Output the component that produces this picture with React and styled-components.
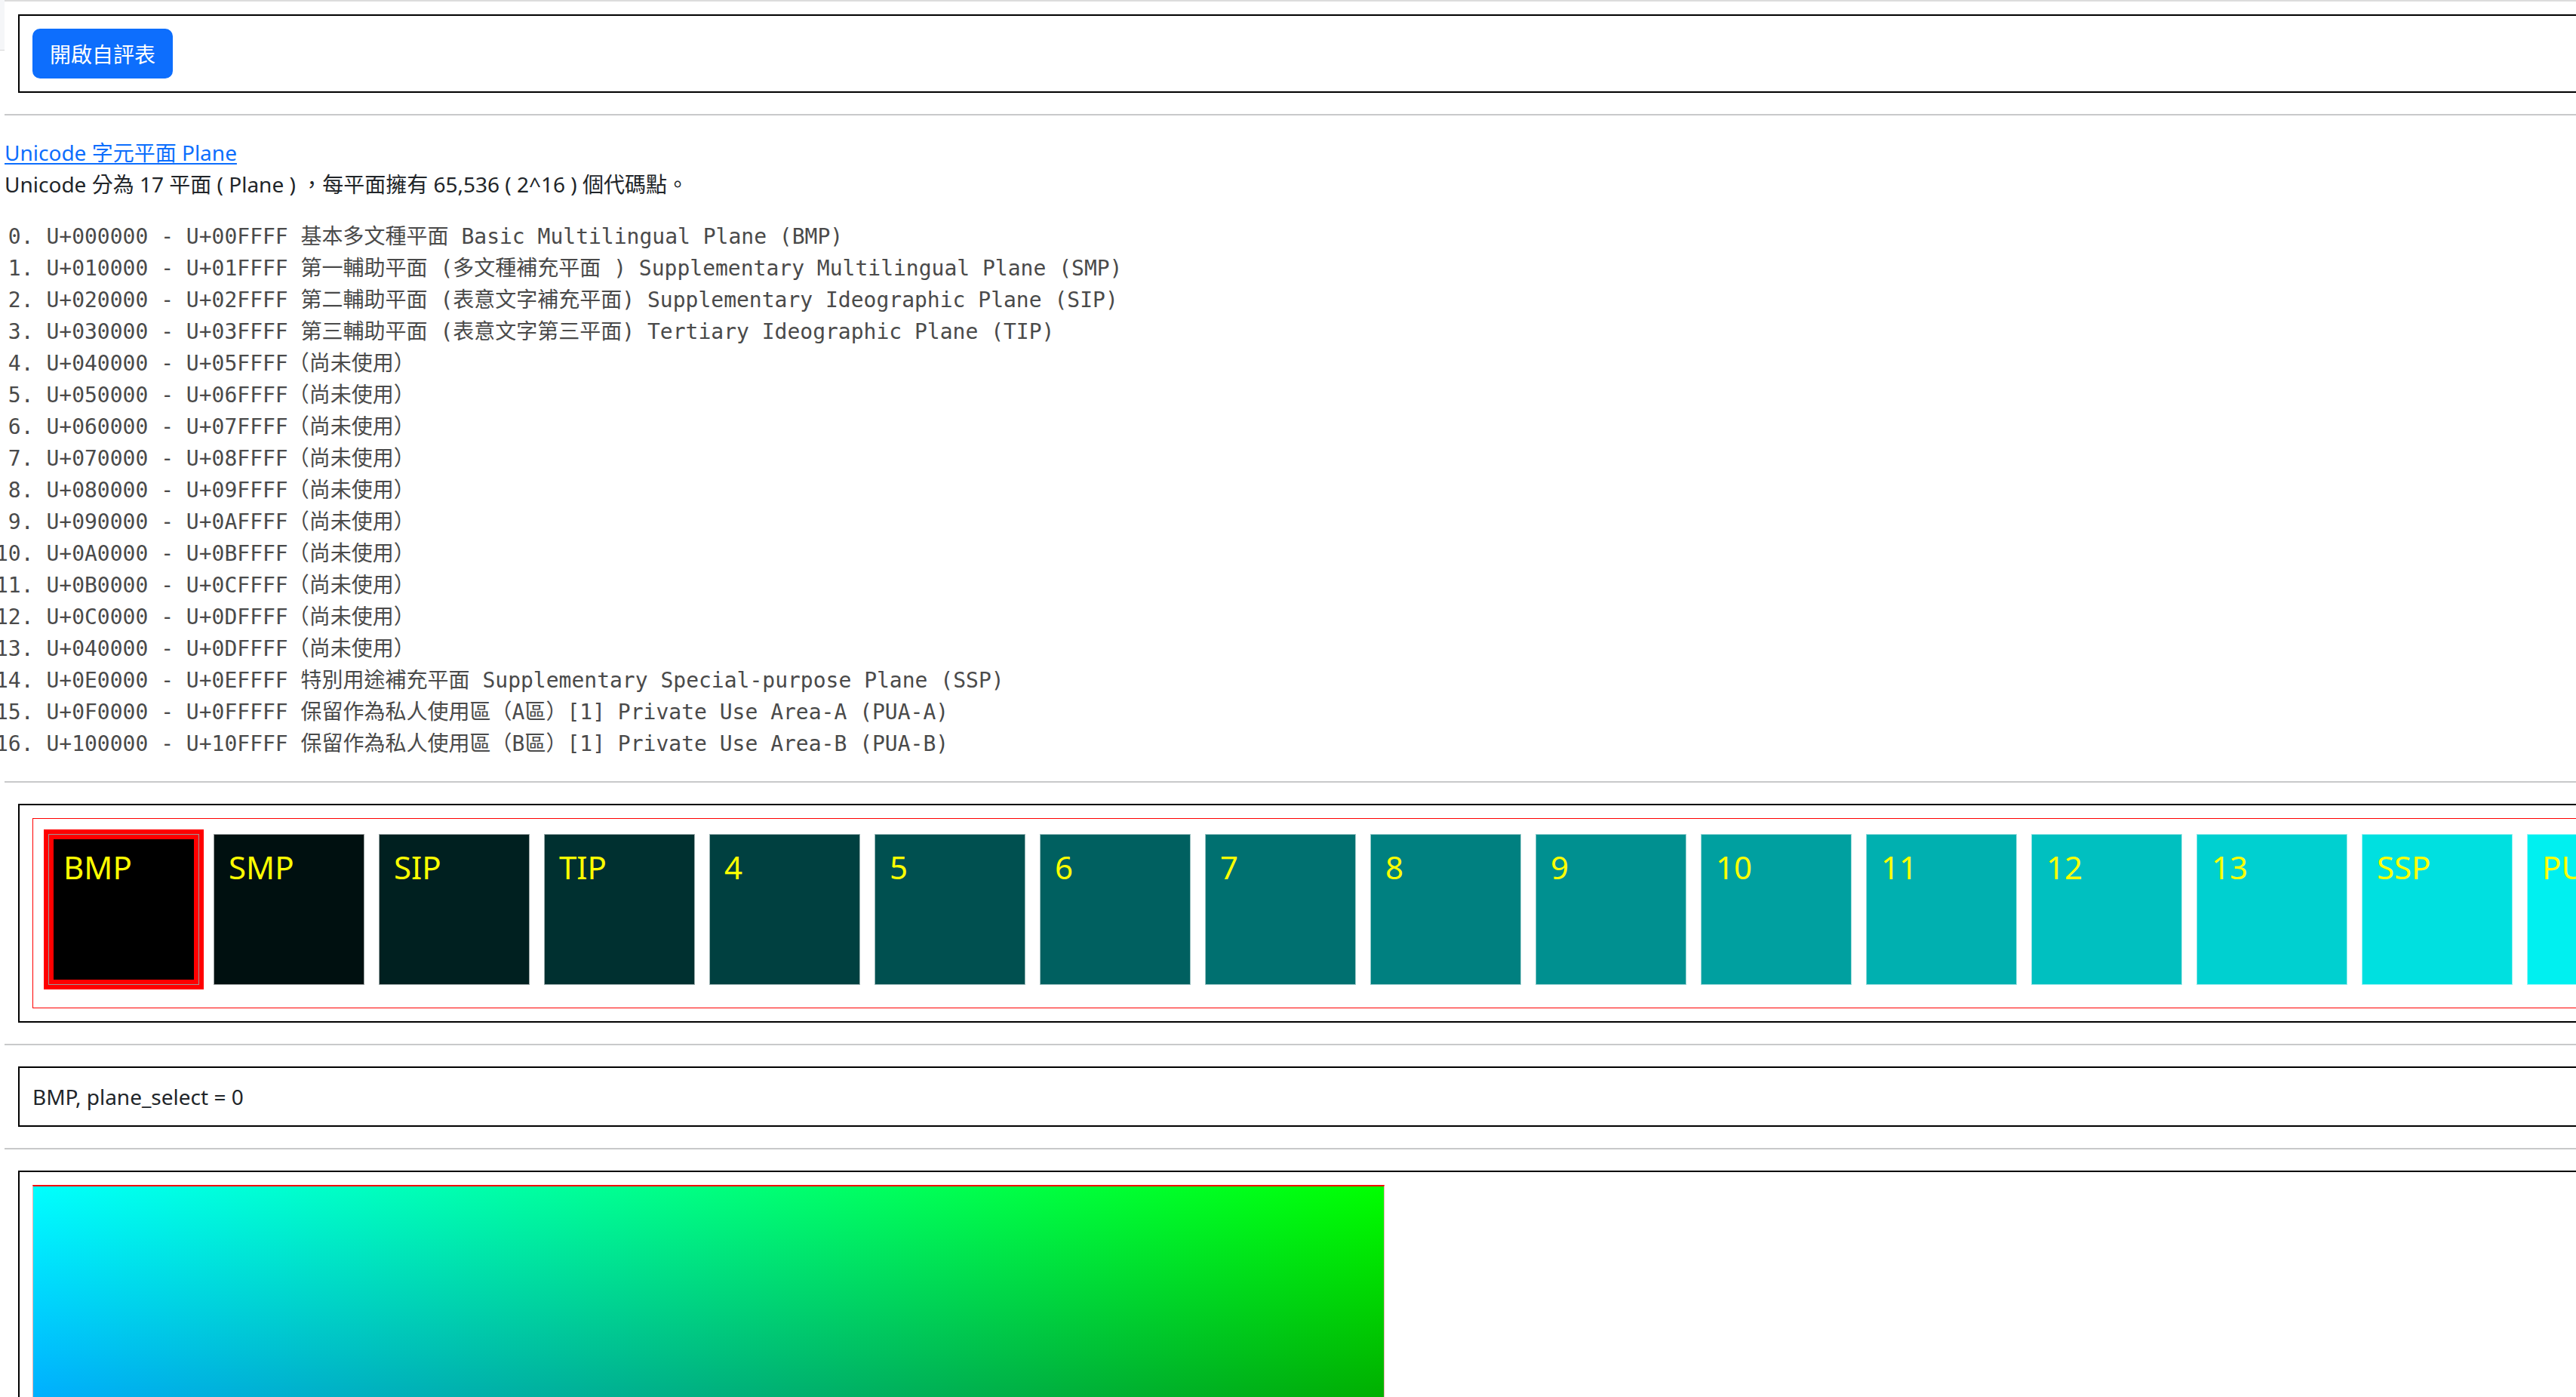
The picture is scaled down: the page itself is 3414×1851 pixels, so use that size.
import React, { useState } from 'react';
import styled, { createGlobalStyle } from 'styled-components';

const GlobalStyle = createGlobalStyle`
  html, body {
    margin: 0;
    padding: 0;
    overflow: hidden;
    background: #fff;
  }
  body {
    font-family: "Noto Sans", "Noto Sans CJK TC", sans-serif;
    font-size: 28px;
    line-height: 1.5;
    color: #212529;
  }
`;

const Page = styled.div`
  position: relative;
  width: 3840px;
  padding-left: 6px;
  border-top: 2px solid #dcdcdc;
`;

const EdgeStub = styled.div`
  position: absolute;
  left: 0;
  top: -2px;
  width: 6px;
  height: 66px;
  background: #f5f6f8;
  border-bottom: 1px solid #d6d6d6;
`;

const Box = styled.div`
  margin-left: 18px;
  margin-top: ${(p) => p.$top || 0}px;
  border: 2px solid #000;
  padding: 17px;
`;

const Rule = styled.hr`
  margin: 28px 0;
  border: 0;
  border-top: 2px solid #c8c9ca;
`;

const Button = styled.button`
  font-family: "Noto Sans CJK TC", "Noto Sans", sans-serif;
  font-size: 28px;
  line-height: 1.5;
  color: #fff;
  background-color: #0d6efd;
  border: 2px solid #0d6efd;
  border-radius: 10px;
  padding: 10px 21px;
  cursor: pointer;
  display: block;
`;

const Intro = styled.div`
  margin-bottom: 28px;
`;

const PlaneLink = styled.a`
  color: #0d6efd;
  text-decoration: underline;
  text-underline-offset: 3px;
`;

const Listing = styled.div`
  margin-left: -12px;
  font-family: "DejaVu Sans Mono", "Noto Sans CJK TC", monospace;
  font-size: 28px;
  line-height: 42px;
  color: #4a4a4a;
  white-space: pre;
`;

const Strip = styled.div`
  border: 1px solid #ff0000;
  padding: 20px 20px 30px;
  display: flex;
  gap: 19px;
`;

const Tile = styled.div`
  flex: 0 0 200px;
  height: 200px;
  box-sizing: border-box;
  border: 1px solid rgba(255, 255, 255, 0.6);
  background-color: ${(p) => p.$bg};
  padding: 11px 19px;
  font-size: 42px;
  line-height: 1.5;
  color: #ffff00;
  cursor: pointer;
  box-shadow: ${(p) =>
    p.$selected ? '0 0 0 6px #ff0000, inset 0 0 0 6px #ff0000' : 'none'};
`;

const Status = styled.div`
  line-height: 42px;
`;

const ColorMap = styled.div`
  width: 1792px;
  height: 896px;
  box-sizing: border-box;
  border: 1px solid #e9b4b4;
  border-top: 2px solid #ff0000;
  background-image: linear-gradient(to right, #0000ff, #000000),
    linear-gradient(to bottom, #00ff00, #000000);
  background-blend-mode: screen;
`;

const lines = [
  ' 0. U+000000 - U+00FFFF 基本多文種平面 Basic Multilingual Plane (BMP)',
  ' 1. U+010000 - U+01FFFF 第一輔助平面 (多文種補充平面 ) Supplementary Multilingual Plane (SMP)',
  ' 2. U+020000 - U+02FFFF 第二輔助平面 (表意文字補充平面) Supplementary Ideographic Plane (SIP)',
  ' 3. U+030000 - U+03FFFF 第三輔助平面 (表意文字第三平面) Tertiary Ideographic Plane (TIP)',
  ' 4. U+040000 - U+05FFFF（尚未使用）',
  ' 5. U+050000 - U+06FFFF（尚未使用）',
  ' 6. U+060000 - U+07FFFF（尚未使用）',
  ' 7. U+070000 - U+08FFFF（尚未使用）',
  ' 8. U+080000 - U+09FFFF（尚未使用）',
  ' 9. U+090000 - U+0AFFFF（尚未使用）',
  '10. U+0A0000 - U+0BFFFF（尚未使用）',
  '11. U+0B0000 - U+0CFFFF（尚未使用）',
  '12. U+0C0000 - U+0DFFFF（尚未使用）',
  '13. U+040000 - U+0DFFFF（尚未使用）',
  '14. U+0E0000 - U+0EFFFF 特別用途補充平面 Supplementary Special-purpose Plane (SSP)',
  '15. U+0F0000 - U+0FFFFF 保留作為私人使用區（A區）[1] Private Use Area-A (PUA-A)',
  '16. U+100000 - U+10FFFF 保留作為私人使用區（B區）[1] Private Use Area-B (PUA-B)',
];

const planes = [
  'BMP', 'SMP', 'SIP', 'TIP', '4', '5', '6', '7', '8', '9',
  '10', '11', '12', '13', 'SSP', 'PUA-A', 'PUA-B',
];

function tileColor(i) {
  const v = Math.min(255, i * 16);
  return `rgb(0, ${v}, ${v})`;
}

function App() {
  const [selected, setSelected] = useState(0);

  return (
    <>
      <GlobalStyle />
      <Page>
        <EdgeStub />
        <Box $top={17}>
          <Button type="button">開啟自評表</Button>
        </Box>
        <Rule />
        <Intro>
          <PlaneLink href="#plane">Unicode 字元平面 Plane</PlaneLink>
          <div>Unicode 分為 17 平面 ( Plane ) ，每平面擁有 65,536 ( 2^16 ) 個代碼點。</div>
        </Intro>
        <Listing>
          {lines.map((line) => (
            <div key={line}>{line}</div>
          ))}
        </Listing>
        <Rule />
        <Box>
          <Strip>
            {planes.map((name, i) => (
              <Tile
                key={name}
                $bg={tileColor(i)}
                $selected={i === selected}
                onClick={() => setSelected(i)}
              >
                {name}
              </Tile>
            ))}
          </Strip>
        </Box>
        <Rule />
        <Box>
          <Status>
            {planes[selected]}, plane_select = {selected}
          </Status>
        </Box>
        <Rule />
        <Box>
          <ColorMap />
        </Box>
      </Page>
    </>
  );
}

export default App;
